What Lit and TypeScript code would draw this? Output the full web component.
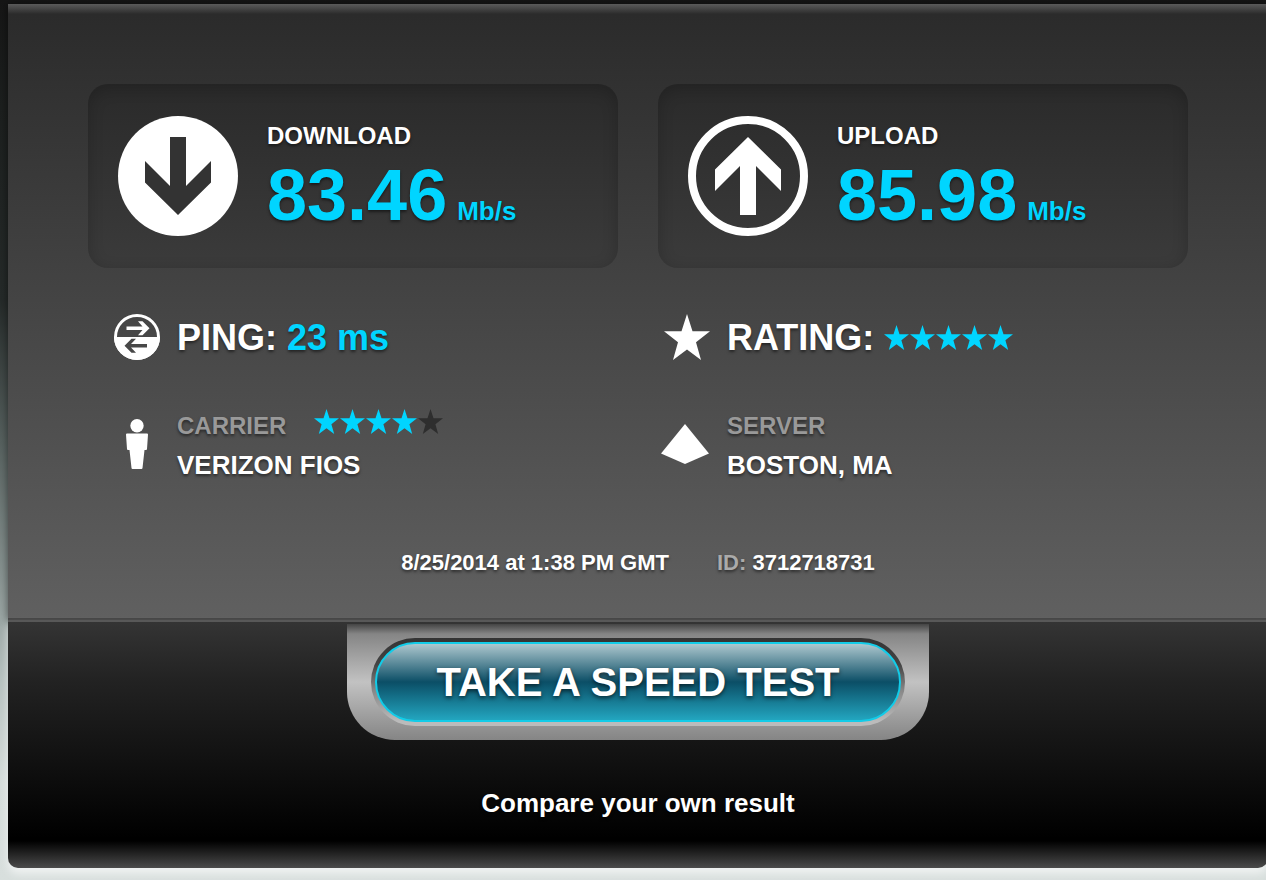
import { LitElement, html, css, svg } from "lit";
import { customElement, property } from "lit/decorators.js";

const STAR = "M12.5 0 L15.5 9.3 L25 9.3 L17.4 15.2 L20.2 25 L12.5 19.2 L4.8 25 L7.6 15.2 L0 9.3 L9.5 9.3 Z";

@customElement("star-rating")
class StarRating extends LitElement {
  @property({ type: Number }) value = 0;

  static styles = css`
    :host { display: inline-block; line-height: 0; }
    .on { fill: #00d5ff; }
    .off { fill: #2e2e2e; }
  `;

  render() {
    return html`<svg width="130" height="25" viewBox="0 0 130 25" role="img" aria-label="${this.value} of 5 stars">
      ${[0, 1, 2, 3, 4].map(
        (i) => svg`<path class=${i < this.value ? "on" : "off"} transform="translate(${i * 26} 0)" d=${STAR} />`
      )}
    </svg>`;
  }
}

@customElement("app-root")
class AppRoot extends LitElement {
  static styles = css`
    :host {
      display: block;
      box-sizing: border-box;
      min-height: 100vh;
      padding: 4px 0 12px 8px;
      overflow: hidden;
      font-family: "Liberation Sans", Arial, Helvetica, sans-serif;
      font-weight: bold;
      color: #fff;
      text-shadow: 0 2px 3px rgba(0, 0, 0, 0.5);
      background: linear-gradient(#161616 0, #1c1f1e 12%, #252a29 34%, #56605e 50%, #879290 65%, #b4bfbd 77%, #d5dcda 89%, #d8dfdd 100%);
    }
    .panel { margin-right: -2px; }
    .results {
      padding: 80px 80px 42px;
      border-bottom: 2px solid #444;
      box-shadow: 0 0 8px rgba(0, 0, 0, 0.5);
      background:
        linear-gradient(#5a5a5a, rgba(60, 60, 60, 0.6) 8px, rgba(42, 42, 42, 0) 10px) no-repeat,
        linear-gradient(#2a2a2a, #606060);
    }
    .cards {
      display: grid;
      grid-template-columns: 1fr 1fr;
      gap: 40px;
    }
    .card {
      display: flex;
      gap: 29px;
      padding: 32px 30px;
      border-radius: 20px;
      background: linear-gradient(#2a2a2a, #3b3b3b);
      box-shadow: inset 0 4px 16px rgba(0, 0, 0, 0.2);
    }
    .reading { padding-top: 6px; }
    .title { margin: 0 0 5px; font-size: 24px; line-height: 28px; }
    .speed { margin: 0; font-size: 72px; line-height: 80px; color: #00d5ff; white-space: nowrap; }
    .unit { margin-left: 10px; font-size: 26px; line-height: 28px; }
    .icon { flex: none; display: block; fill: #fff; }
    .details {
      display: grid;
      grid-template-columns: 1fr 1fr;
      row-gap: 48px;
      margin-top: 46px;
    }
    .detail { display: flex; align-items: center; gap: 14px; padding-left: 23px; }
    .headline { display: flex; align-items: baseline; gap: 10px; padding-top: 2px; font-size: 36px; line-height: 40px; }
    .cyan { color: #00d5ff; }
    .label { display: flex; align-items: baseline; gap: 28px; margin-bottom: 5px; font-size: 24px; line-height: 36px; color: #999; }
    .value { font-size: 26px; line-height: 32px; }
    .meta { display: flex; justify-content: center; gap: 48px; margin-top: 68px; font-size: 22px; line-height: 27px; }
    .muted { color: #aaa; }
    .footer {
      display: flex;
      flex-direction: column;
      align-items: center;
      padding: 2px 0 49px;
      border-top: 2px solid #585858;
      border-radius: 0 0 10px 10px;
      background: linear-gradient(#343434 0, #222 24%, #000 88%, #000 89%, #4b4b4b 100%);
      box-shadow: 0 6px 8px rgba(255, 255, 255, 0.6);
    }
    .cradle {
      padding: 14px 24px;
      border-radius: 0 0 48px 48px;
      background: linear-gradient(#444 0, #858585 10px, #c2c2c2 50%, #858585 100%);
    }
    .ring { padding: 4px; border-radius: 44px; background: linear-gradient(#333, #444 30%, #888 60%, #bbb 95%); }
    .start {
      display: block;
      padding: 14px 59px;
      border: 2px solid #12cce8;
      border-radius: 40px;
      font: inherit;
      font-size: 40px;
      line-height: 48px;
      color: #fff;
      text-shadow: 0 2px 4px rgba(0, 0, 0, 0.6);
      white-space: nowrap;
      cursor: pointer;
      background: linear-gradient(#b6ced4, #0b4e66 50%, #24aac4) border-box;
    }
    .compare { margin-top: 47px; font-size: 26px; line-height: 32px; color: #fff; text-decoration: none; }
  `;

  render() {
    return html`
      <main class="panel">
        <section class="results">
          <div class="cards">
            <div class="card">
              <svg class="icon" width="120" height="120" viewBox="0 0 120 120" aria-hidden="true">
                <circle cx="60" cy="60" r="60" />
                <path fill="#333" d="M52 21H68V70L93 45V66.500L60 99L27 66.500V45L52 70Z" />
              </svg>
              <div class="reading">
                <h2 class="title">DOWNLOAD</h2>
                <p class="speed">83.46<span class="unit">Mb/s</span></p>
              </div>
            </div>
            <div class="card">
              <svg class="icon" width="120" height="120" viewBox="0 0 120 120" aria-hidden="true">
                <circle cx="60" cy="60" r="56" fill="none" stroke="#fff" stroke-width="8" />
                <path d="M52 99H68V50L93 75V53.500L60 21L27 53.500V75L52 50Z" />
              </svg>
              <div class="reading">
                <h2 class="title">UPLOAD</h2>
                <p class="speed">85.98<span class="unit">Mb/s</span></p>
              </div>
            </div>
          </div>

          <div class="details">
            <div class="detail">
              <svg class="icon" width="52" height="46" viewBox="0 0 52 46" aria-hidden="true">
                <circle cx="26" cy="23" r="21.500" fill="none" stroke="#fff" stroke-width="3" />
                <path d="M3 23H49A23 23 0 0 1 3 23Z" />
                <path d="M15.500 12.500H31.500L27 7.200H31.500L38.500 14.250L31.500 21.300H27L31.500 16H15.500Z" />
                <path fill="#484848" d="M36 30H20L25 24.700H20.500L13.500 31.750L20.500 38.800H25L20 33.500H36Z" />
              </svg>
              <div class="headline"><span>PING: <span class="cyan">23 ms</span></span></div>
            </div>
            <div class="detail">
              <svg class="icon" width="52" height="46" viewBox="0 0 52 46" aria-hidden="true">
                <path d="M26 0L31.500 17.300H49L35 28.300L40 46L26 35.500L12 46L17 28.300L3 17.300H20.500Z" />
              </svg>
              <div class="headline"><span>RATING:</span><star-rating .value=${5}></star-rating></div>
            </div>
            <div class="detail">
              <svg class="icon" width="52" height="51" viewBox="0 0 52 51" aria-hidden="true">
                <circle cx="26" cy="6.700" r="6.700" />
                <path d="M16 14.500H36Q37 14.500 37 15.500L36 30Q36 31 35 31H33.500L31.500 49Q31.400 50 30.500 50H21.500Q20.600 50 20.500 49L18.500 31H17Q16 31 16 30L15 15.500Q15 14.500 16 14.500Z" />
              </svg>
              <div>
                <div class="label"><span>CARRIER</span><star-rating .value=${4}></star-rating></div>
                <div class="value">VERIZON FIOS</div>
              </div>
            </div>
            <div class="detail">
              <svg class="icon" width="52" height="41" viewBox="0 0 52 41" aria-hidden="true">
                <path d="M24 0L48 29.500L24 40L0 29.500Z" />
              </svg>
              <div>
                <div class="label">SERVER</div>
                <div class="value">BOSTON, MA</div>
              </div>
            </div>
          </div>

          <div class="meta">
            <span>8/25/2014 at 1:38 PM GMT</span>
            <span><span class="muted">ID:</span> 3712718731</span>
          </div>
        </section>

        <section class="footer">
          <div class="cradle">
            <div class="ring"><button class="start" type="button">TAKE A SPEED TEST</button></div>
          </div>
          <a class="compare" href="#">Compare your own result</a>
        </section>
      </main>
    `;
  }
}
